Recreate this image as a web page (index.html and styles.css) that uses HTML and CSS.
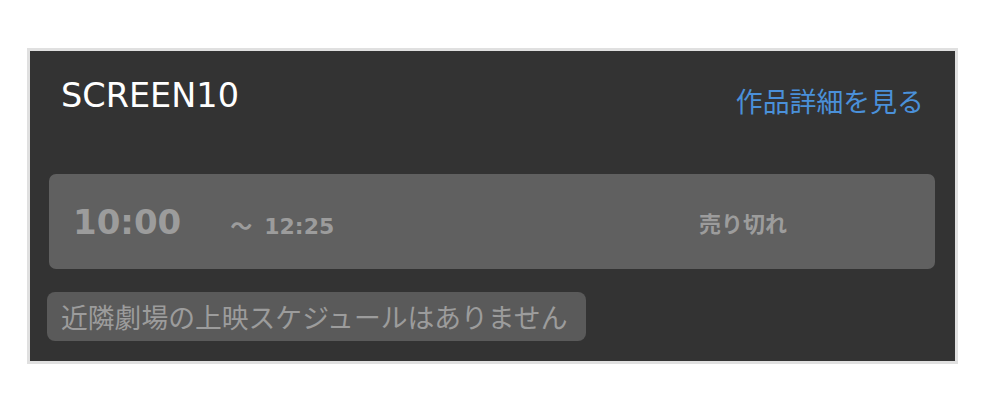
FILE: index.html
```html
<!DOCTYPE html>
<html lang="ja">
<head>
<meta charset="utf-8">
<link rel="stylesheet" href="styles.css">
</head>
<body>
<div class="panel">
  <div class="header">
    <div class="title">SCREEN10</div>
    <a class="detail" href="#">作品詳細を見る</a>
  </div>
  <div class="row">
    <div class="times">
      <span class="start">10:00</span>
      <span class="tilde">〜</span>
      <span class="end">12:25</span>
    </div>
    <div class="status">売り切れ</div>
  </div>
  <div class="notice">近隣劇場の上映スケジュールはありません</div>
</div>
</body>
</html>
```
FILE: styles.css
```css
html, body {
  margin: 0;
  padding: 0;
  background: #ffffff;
}
body {
  font-family: "DejaVu Sans", "Noto Sans CJK JP", sans-serif;
}
.panel {
  box-sizing: border-box;
  margin: 48px 0 0 27px;
  width: 931px;
  height: 316px;
  border: 3px solid #e0e0e0;
  background: #333333;
  padding: 25px 31px 0 0;
}
.header {
  display: flex;
  justify-content: space-between;
  align-items: flex-start;
  height: 40px;
  margin-bottom: 58px;
}
.title {
  margin-left: 31px;
  font-size: 33.5px;
  line-height: 40px;
  color: #ffffff;
}
.detail {
  margin-top: 11px;
  font-family: "Noto Sans CJK JP", sans-serif;
  font-size: 26.9px;
  line-height: 28px;
  color: #4a90d9;
  text-decoration: none;
}
.row {
  box-sizing: border-box;
  margin: 0 -11px 0 19px;
  height: 95px;
  background: #606060;
  border-radius: 7px;
  display: flex;
  align-items: center;
  padding-left: 24px;
}
.times {
  display: flex;
  align-items: baseline;
  width: 626px;
  color: #9c9c9c;
  font-weight: bold;
}
.start {
  font-size: 34px;
}
.tilde {
  margin-left: 49px;
  font-size: 22px;
  font-weight: bold;
  font-family: "Noto Sans CJK JP", sans-serif;
}
.end {
  margin-left: 12px;
  font-size: 22px;
}
.status {
  font-family: "Noto Sans CJK JP", sans-serif;
  font-weight: bold;
  font-size: 22px;
  color: #9c9c9c;
}
.notice {
  display: inline-block;
  box-sizing: border-box;
  margin: 23px 0 0 17px;
  height: 49px;
  width: 539px;
  padding-left: 14px;
  background: #5a5a5a;
  border-radius: 8px;
  font-family: "Noto Sans CJK JP", sans-serif;
  font-size: 26.8px;
  line-height: 49px;
  color: #9c9c9c;
  white-space: nowrap;
}
```
